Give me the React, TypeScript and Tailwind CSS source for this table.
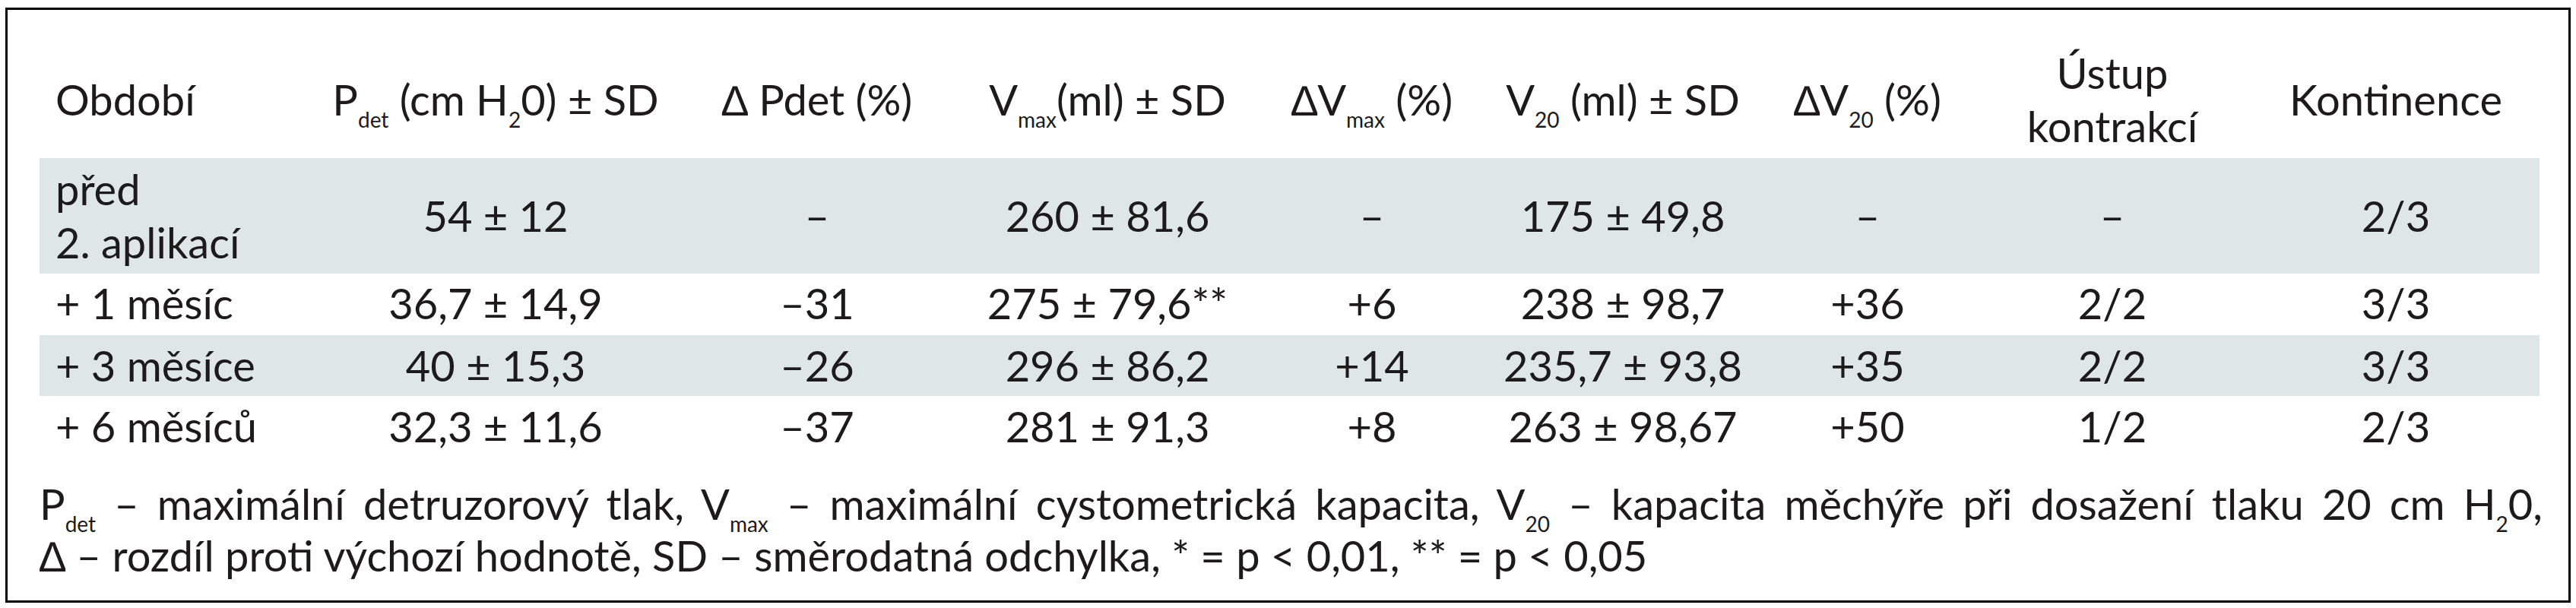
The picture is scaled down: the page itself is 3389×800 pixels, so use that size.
import React from "react";

const Sub = ({ children }: { children: React.ReactNode }) => (
  <span className="text-[28px] leading-[0] align-[-16px]">{children}</span>
);

const cols =
  "grid grid-cols-[357px_486px_360px_404px_292px_368px_276px_368px_378px]";

type Row = { cells: React.ReactNode[]; shaded: boolean; cls: string };

const rows: Row[] = [
  {
    cells: [
      <>
        před
        <br />
        2. aplikací
      </>,
      "54 ± 12",
      "–",
      "260 ± 81,6",
      "–",
      "175 ± 49,8",
      "–",
      "–",
      "2/3",
    ],
    shaded: true,
    cls: "h-[152px]",
  },
  {
    cells: ["+ 1 měsíc", "36,7 ± 14,9", "–31", "275 ± 79,6**", "+6", "238 ± 98,7", "+36", "2/2", "3/3"],
    shaded: false,
    cls: "h-[81px] pb-[3px]",
  },
  {
    cells: ["+ 3 měsíce", "40 ± 15,3", "–26", "296 ± 86,2", "+14", "235,7 ± 93,8", "+35", "2/2", "3/3"],
    shaded: true,
    cls: "h-[80px]",
  },
  {
    cells: ["+ 6 měsíců", "32,3 ± 11,6", "–37", "281 ± 91,3", "+8", "263 ± 98,67", "+50", "1/2", "2/3"],
    shaded: false,
    cls: "h-[80px]",
  },
];

const header: React.ReactNode[] = [
  "Období",
  <>
    P<Sub>det</Sub> (cm H<Sub>2</Sub>0) ± SD
  </>,
  "∆ Pdet (%)",
  <>
    V<Sub>max</Sub>(ml) ± SD
  </>,
  <>
    ∆V<Sub>max</Sub> (%)
  </>,
  <>
    V<Sub>20</Sub> (ml) ± SD
  </>,
  <>
    ∆V<Sub>20</Sub> (%)
  </>,
  <>
    Ústup
    <br />
    kontrakcí
  </>,
  "Kontinence",
];

export default function App() {
  return (
    <div className="w-[3389px] h-[800px] bg-white pt-[10px] pl-[7px]">
      <div
        className="w-[3375px] h-[783px] border-[3px] border-black bg-white text-[56px] leading-[70px] text-[#1c1a1a]"
        style={{ fontFamily: "Lato, 'Noto Sans', sans-serif" }}
      >
        <div className="pl-[42px] pr-[38px]">
          <div className={`${cols} pt-[48px] pb-[7px]`}>
            {header.map((h, i) => (
              <div
                key={i}
                className={
                  i === 0
                    ? "flex items-center pl-[21px] whitespace-nowrap"
                    : "flex items-center justify-center text-center whitespace-nowrap h-[140px]"
                }
              >
                <div>{h}</div>
              </div>
            ))}
          </div>
          {rows.map((r, ri) => (
            <div
              key={ri}
              className={`${cols} ${r.cls} ${r.shaded ? "bg-[#dfe6e6]" : ""}`}
            >
              {r.cells.map((c, ci) => (
                <div
                  key={ci}
                  className={
                    ci === 0
                      ? "flex items-center pl-[21px] whitespace-nowrap"
                      : "flex items-center justify-center text-center whitespace-nowrap"
                  }
                >
                  <div>{c}</div>
                </div>
              ))}
            </div>
          ))}
        </div>
        <div className="pl-[42px] pr-[34px] mt-[28px] leading-[68px]">
          <p className="text-justify [text-align-last:justify] whitespace-nowrap">
            P<Sub>det</Sub> – maximální detruzorový tlak, V<Sub>max</Sub> – maximální cystometrická kapacita,
            V<Sub>20</Sub> – kapacita měchýře při dosažení tlaku 20 cm H<Sub>2</Sub>0,
          </p>
          <p>
            ∆ – rozdíl proti výchozí hodnotě, SD – směrodatná odchylka, * = p &lt; 0,01, ** = p &lt; 0,05
          </p>
        </div>
      </div>
    </div>
  );
}
